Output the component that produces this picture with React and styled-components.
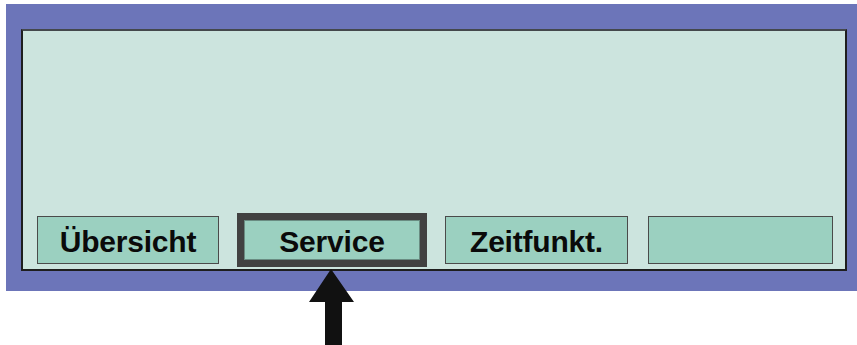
import React from "react";
import styled, { createGlobalStyle } from "styled-components";

const Global = createGlobalStyle`
  html, body { margin: 0; padding: 0; background: #ffffff; }
  body { font-family: "Liberation Sans", Arial, sans-serif; }
`;

const Page = styled.div`
  position: relative;
  width: 857px;
  height: 345px;
  padding: 4px 0 0 6px;
  box-sizing: border-box;
  overflow: hidden;
`;

const Frame = styled.div`
  width: 851px;
  height: 287px;
  box-sizing: border-box;
  padding: 25px 10px 20px 15px;
  background: #6c75b9;
`;

const Panel = styled.div`
  height: 100%;
  box-sizing: border-box;
  background: #cce4de;
  border: 2px solid #1e1e1e;
  border-top-color: #44484c;
  display: flex;
  flex-direction: column;
  justify-content: flex-end;
`;

const ButtonRow = styled.div`
  display: flex;
  align-items: center;
  gap: 18px;
  height: 54px;
  padding: 0 0 2px 14px;
`;

const Tab = styled.div`
  width: ${(p) => p.$w}px;
  height: 48px;
  box-sizing: border-box;
  margin-left: ${(p) => p.$ml || 0}px;
  padding-top: 4px;
  background: #9bd0c0;
  border: 1px solid #4a4a4a;
  display: flex;
  align-items: center;
  justify-content: center;
  font-weight: 700;
  font-size: 30px;
  color: #0a0a0a;
  letter-spacing: -0.2px;
`;

const ActiveFrame = styled.div`
  width: ${(p) => p.$w}px;
  height: 54px;
  box-sizing: border-box;
  border: 7px solid #414141;
  display: flex;
`;

const ActiveTab = styled(Tab)`
  flex: 1;
  width: auto;
  height: 100%;
  border-color: #6a8c82;
`;

const Arrow = styled.svg`
  position: absolute;
  left: 309px;
  top: 269px;
  width: 46px;
  height: 76px;
  display: block;
`;

export default function App() {
  return (
    <>
      <Global />
      <Page>
        <Frame>
          <Panel>
            <ButtonRow>
              <Tab $w={182}>Übersicht</Tab>
              <ActiveFrame $w={190}>
                <ActiveTab>Service</ActiveTab>
              </ActiveFrame>
              <Tab $w={183}>Zeitfunkt.</Tab>
              <Tab $w={185} $ml={2}></Tab>
            </ButtonRow>
          </Panel>
        </Frame>
        <Arrow viewBox="0 0 46 76">
          <polygon points="22,0 45,33 33,33 33,76 16,76 16,33 0,33" fill="#111111" />
        </Arrow>
      </Page>
    </>
  );
}
